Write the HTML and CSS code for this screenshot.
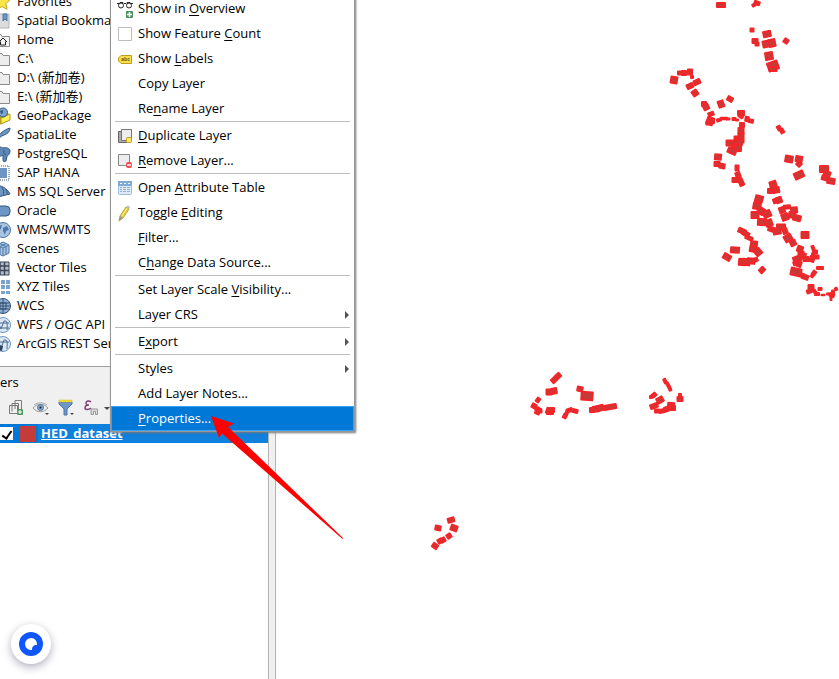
FILE: index.html
```html
<!DOCTYPE html>
<html lang="en">
<head>
  <meta charset="UTF-8" />
  <meta name="viewport" content="width=device-width, initial-scale=1.0"/>
  <title>HED_dataset - QGIS</title>
  <link rel="stylesheet" href="styles.css">
</head>
<body>

<main class="window">
  <aside class="dock">
    <section class="browser">
      <ul class="tree">
        <li><svg class="icon" viewBox="0 0 16 16"><path d="M8 0l2.400 5.200 5.600.6-4.200 3.800 1.200 5.700L8 12.500l-5 2.800 1.200-5.700L0 5.800l5.600-.6z" fill="#fbe54a" stroke="#c9a51a"/></svg>Favorites</li>
        <li><svg class="icon" viewBox="0 0 16 16"><path d="M1 1h14v14H1z" fill="#dcdcde" stroke="#b5b5b8"/><path d="M9 1h4v7l-2-2-2 2z" fill="#6d96c4" stroke="#4b77a8"/></svg>Spatial Bookmarks</li>
        <li><svg class="icon" viewBox="0 0 16 16"><path d="M1 2.500h6l1 2h7.500v10H1z" fill="#f3f3f3" stroke="#8b8b8b"/><path d="M5 10l4-4 4 4M6.500 9.500V13h5V9.500" fill="none" stroke="#222"/></svg>Home</li>
        <li><svg class="icon" viewBox="0 0 16 16"><path d="M0 2.500h8l1 2h6.500v10H0z" fill="#ededed" stroke="#8b8b8b"/></svg>C:\</li>
        <li><svg class="icon" viewBox="0 0 16 16"><path d="M0 2.500h8l1 2h6.500v10H0z" fill="#ededed" stroke="#8b8b8b"/></svg>D:\ (新加卷)</li>
        <li><svg class="icon" viewBox="0 0 16 16"><path d="M0 2.500h8l1 2h6.500v10H0z" fill="#ededed" stroke="#8b8b8b"/></svg>E:\ (新加卷)</li>
        <li><svg class="icon" viewBox="0 0 16 16"><path d="M1 7l6 3v6l-6-3z" fill="#e9cf2b" stroke="#9b8411"/><path d="M7 10l9-4v6l-9 4z" fill="#fdf05a" stroke="#b49a19"/><path d="M1 7l8-3 7 2-9 4z" fill="#c9ae22"/><circle cx="9" cy="4.500" r="4.500" fill="#7ba3cc" stroke="#35597f"/><path d="M6 3l3-1v3l-2 1z" fill="#35597f"/></svg>GeoPackage</li>
        <li><svg class="icon" viewBox="0 0 16 16"><path d="M1 15C4 8 9 3 16 1c0 4-3 6-6 7s-5 3-9 7z" fill="#6d96c4" stroke="#35597f"/></svg>SpatiaLite</li>
        <li><svg class="icon" viewBox="0 0 16 16"><path d="M2 2c3-2 5-1 7 0 3-1 7 0 7 3 0 2-1 4-3 5l-1 5c-1 1-3 1-3-1V9C5 12 3 9 2 2z" fill="#5d88b5" stroke="#35597f"/><path d="M10 4c-1 2 0 4 2 5" fill="none" stroke="#35597f"/></svg>PostgreSQL</li>
        <li><svg class="icon" viewBox="0 0 16 16"><path d="M3 3h10v10H3z" fill="#6d96c4"/><path d="M1 1h14v14H1z" fill="none" stroke="#35597f" stroke-dasharray="1 1"/></svg>SAP HANA</li>
        <li><svg class="icon" viewBox="0 0 16 16"><path d="M0 1c7 0 13 3 16 9-5 1-10 3-16 3z" fill="#6d96c4" stroke="#35597f"/><path d="M8 3c2 3 2 6 1 8M12 5c1 2 1 4 1 5" fill="none" stroke="#35597f"/></svg>MS SQL Server</li>
        <li><svg class="icon" viewBox="0 0 16 16"><rect x="0" y="3" width="16" height="10" rx="4" fill="#6d96c4" stroke="#35597f"/></svg>Oracle</li>
        <li><svg class="icon" viewBox="0 0 16 16"><circle cx="9" cy="8" r="7.500" fill="#a9c4e0" stroke="#4b77a8"/><path d="M3 4l5-1-1 4-2 1 1 4-3-3zM9 6l4-2 2 4-3 1-1 4-2-4z" fill="#4b77a8"/></svg>WMS/WMTS</li>
        <li><svg class="icon" viewBox="0 0 16 16"><path d="M9 1l6 3v8l-6 3-6-3V4z" fill="#a9c4e0" stroke="#4b77a8"/><path d="M3 4l6 3 6-3M9 7v8M6 2.500l6 3v8M12 2.500l-6 3v8" fill="none" stroke="#4b77a8"/></svg>Scenes</li>
        <li><svg class="icon" viewBox="0 0 16 16"><path d="M1 2h14v13H1z" fill="#b6bdc8" stroke="#3d4657"/><path d="M6 2v13M10.500 2v13M1 6h14M1 10.500h14" stroke="#3d4657" stroke-width="1.500"/></svg>Vector Tiles</li>
        <li><svg class="icon" viewBox="0 0 16 16"><path d="M1 1h4v4H1zM7 1h4v4H7zM12 1h4v4h-4zM1 6h4v4H1zM7 6h4v4H7zM12 6h4v4h-4zM1 12h4v3H1zM7 12h4v3H7zM12 12h4v3h-4z" fill="#7ba3cc"/></svg>XYZ Tiles</li>
        <li><svg class="icon" viewBox="0 0 16 16"><circle cx="9" cy="8" r="7.500" fill="#8fb0d4" stroke="#35506f"/><path d="M6 5h6v6H6zM2 8h14M9 1v14M3 5h12M3 11h12" fill="none" stroke="#35506f"/></svg>WCS</li>
        <li><svg class="icon" viewBox="0 0 16 16"><circle cx="9" cy="8" r="7.500" fill="#dbe6f2" stroke="#6d96c4"/><path d="M1 6h14M1 11h14M3 3l4 9 3-8 2 0M12 4c2 2 1 6 1 9" fill="none" stroke="#4b6f96"/></svg>WFS / OGC API</li>
        <li><svg class="icon" viewBox="0 0 16 16"><circle cx="9" cy="8" r="7.500" fill="#dbe6f2" stroke="#6d96c4"/><path d="M1 6h14M3 3l4 9 3-8 2 0M12 4c2 2 1 6 1 9" fill="none" stroke="#4b6f96"/><path d="M5 9l4 1-1 5-4-1z" fill="#294260"/></svg>ArcGIS REST Servers</li>
      </ul>
    </section>

    <section class="layers">
      <h2 class="panel-title">ers</h2>
      <div class="toolbar">
        <button class="tool" aria-label="Add Group"><svg class="icon" viewBox="0 0 16 16"><path d="M1.500 5.500h8v8h-8z" fill="none" stroke="#7b7b7b"/><path d="M4 11.500V3.500h6.500V9M7 9V.5h6.500V9" fill="none" stroke="#7b7b7b"/><rect x="9" y="9" width="6" height="6" rx="1" fill="#4f9a60"/><path d="M12 10v4M10 12h4" stroke="#fff"/></svg></button>
        <button class="tool" aria-label="Manage Map Themes"><svg class="icon" viewBox="0 0 16 16"><path d="M0 8c4-5 11-5 15 0-4 5-11 5-15 0z" fill="#eee" stroke="#999"/><circle cx="7.500" cy="7.500" r="3" fill="#7ba3cc" stroke="#5b7fa6"/><circle cx="7.500" cy="7.500" r="1" fill="#222"/><path d="M1 5c4-3 9-3 13 0" fill="none" stroke="#aaa"/><path d="M12 13h4l-2 2z" fill="#444"/></svg></button>
        <button class="tool" aria-label="Filter Legend"><svg class="icon" viewBox="0 0 16 16"><path d="M1 2h13v2L9 9v6H6V9L1 4z" fill="#6d96c4" stroke="#4b77a8"/><path d="M1 0h13v2H1z" fill="#f2df38" stroke="#d0b92a" stroke-width=".5"/><path d="M12 13h4l-2 2z" fill="#444"/></svg></button>
        <button class="tool" aria-label="Filter Legend by Expression"><svg class="icon" viewBox="0 0 16 16"><path d="M8 2C6 0 3 1 3 3s1 2 3 2C3 5 2 6 2 8s4 2 6 0" fill="none" stroke="#7f3f79" stroke-width="1.500"/><path d="M8 14.500V9h6.500v5.500h-2v-3h-2v3z" fill="#ddd" stroke="#999"/></svg></button>
        <span class="drop"></span>
      </div>
      <div class="layer-list">
        <label class="layer-row">
          <input type="checkbox" class="layer-check" checked>
          <span class="swatch"></span>
          <span class="layer-name">HED_dataset</span>
        </label>
      </div>
    </section>
  </aside>

  <div class="splitter"></div>

  <section class="map">
    <svg id="mapCanvas" class="map-canvas" viewBox="276 0 563 679" preserveAspectRatio="xMinYMin"></svg>
  </section>
</main>

<div class="menu" role="menu">
  <button class="item"><svg class="icon" viewBox="0 0 16 16"><path d="M0 2.500h2l1-1h3l1 1h2l1-1h3l1 1h2" fill="none" stroke="#222"/><circle cx="4" cy="4.500" r="2.500" fill="none" stroke="#222"/><circle cx="12" cy="4.500" r="2.500" fill="none" stroke="#222"/><rect x="9" y="10" width="7" height="7" rx="1" fill="#4c9060"/><path d="M12.500 11v5M10 13.500h5" stroke="#fff" stroke-width="1.500"/></svg><span>Show in <u>O</u>verview</span></button>
  <button class="item"><svg class="icon" viewBox="0 0 16 16"><path d="M1.500 1.500h13v13h-13z" fill="#fff" stroke="#bdbdbd"/></svg><span>Show Feature <u>C</u>ount</span></button>
  <button class="item"><svg class="icon" viewBox="0 0 16 16"><path d="M4 4.500h10.500v8H4L1.500 10V7z" fill="#f6df4b" stroke="#bd9d19"/><text class="abc" x="4" y="10">abc</text></svg><span>Show <u>L</u>abels</span></button>
  <button class="item"><span class="icon"></span><span>Copy Layer</span></button>
  <button class="item"><span class="icon"></span><span>Re<u>n</u>ame Layer</span></button>
  <hr>
  <button class="item"><svg class="icon" viewBox="0 0 16 16"><path d="M1.500 3.500h9v11h-9z" fill="#aaa" stroke="#666"/><path d="M4.500 1.500h10v11h-10z" fill="#ededed" stroke="#777"/><rect x="9.500" y="9.500" width="5" height="5" rx="1" fill="#fae967" stroke="#c39b1d"/></svg><span><u>D</u>uplicate Layer</span></button>
  <button class="item"><svg class="icon" viewBox="0 0 16 16"><path d="M1.500 1.500h11v11h-11z" fill="#ededed" stroke="#888"/><rect x="9" y="9" width="6" height="6" rx="2" fill="#ec4c55"/><path d="M10 12h4" stroke="#fff" stroke-width="1.500"/></svg><span><u>R</u>emove Layer...</span></button>
  <hr>
  <button class="item"><svg class="icon" viewBox="0 0 16 16"><rect x="1.500" y="1.500" width="13" height="13" rx="1" fill="#e0ebf7" stroke="#9cbcdf"/><path d="M1 1h14v5H1z" fill="#7fa9d6"/><path d="M3 3.500h2M7 3.500h2M11 3.500h2" stroke="#fff"/><path d="M3 7.500h2M3 9.500h2M3 11.500h2M6 7.500h3M6 9.500h3M6 11.500h3M10 7.500h3M10 9.500h3M10 11.500h3" stroke="#8eafd3"/></svg><span>Open <u>A</u>ttribute Table</span></button>
  <button class="item"><svg class="icon" viewBox="0 0 16 16"><path d="M3 11L9 2l3 2-6 9-4 3z" fill="#e8cf3d" stroke="#b9a236"/><path d="M5 11l5-8" stroke="#fff49a"/><path d="M9 2l2-1.500 2 1.500-1 2z" fill="#bbb"/><path d="M3 11l3 2-4 3z" fill="#999"/></svg><span>Toggle <u>E</u>diting</span></button>
  <button class="item"><span class="icon"></span><span><u>F</u>ilter...</span></button>
  <button class="item"><span class="icon"></span><span>C<u>h</u>ange Data Source...</span></button>
  <hr>
  <button class="item"><span class="icon"></span><span>Set Layer Scale <u>V</u>isibility...</span></button>
  <button class="item sub"><span class="icon"></span><span>Layer CRS</span></button>
  <hr>
  <button class="item sub"><span class="icon"></span><span>E<u>x</u>port</span></button>
  <hr>
  <button class="item sub"><span class="icon"></span><span>Styles</span></button>
  <button class="item"><span class="icon"></span><span>Add Layer Notes...</span></button>
  <button class="item active"><span class="icon"></span><span><u>P</u>roperties...</span></button>
</div>

<svg class="arrow" viewBox="0 0 132 124"><path d="M0 0l23 7.500-6 3.500L132 122l-.5 1L11 17.500 8 22z" fill="#f00"/></svg>

<button class="fab" aria-label="Assistant">
  <svg class="fab-icon" viewBox="0 0 24 24"><circle cx="12" cy="12" r="12" fill="#0f56ff"/><path d="M18 13a6 6 0 1 0-5 5c0-3 1-5 5-5z" fill="#fff"/></svg>
</button>

<script>
// building footprints: x, y, width, height, rotation
const buildings = [
  [721,5,8,4,0], [757,3,5,3,20], [754,5,3,2,-30], [752,30,3,3,0], [767,34,7,5,-12], [766,44,6,6,-12], [772,43,6,7,-12],
  [755,41,5,4,0], [757,44,3,3,0], [786,41,4,4,35], [769,56,7,7,-10], [773,66,10,8,-20], [773,69,7,4,0],
  [674,80,6,6,10], [680,73,4,3,0], [684,73,4,4,0], [690,72,4,5,0], [692,77,2,2,0], [697,82,6,4,-25], [690,86,6,4,-25],
  [695,93,5,5,-35], [704,104,4,4,0], [706,107,5,5,-25], [721,104,5,6,-20], [730,99,5,4,30], [711,114,5,3,-20],
  [710,121,6,7,20], [708,123,3,3,0], [712,121,4,4,0], [719,120,4,2,-20], [724,118.500,6,1.500,0], [728,119,3,1,0], [734,119,3,2,0], [737,120,2,1,0],
  [741,113,6,4,0], [741,116,4,3,30], [747,119,3,4,10], [751,121,4,3,10],
  [742,125,4,4,0], [741,131,5,6,0], [741,138,5,9,0], [737,139,5,5,0], [736,144,8,6,0], [730,143,7,5,0], [739,142,7,5,15], [738,148,6,6,0], [732,151,8,5,25],
  [779,128,3,4,-30], [782,131,3,4,-30],
  [718,157,6,5,5], [717,164,5,4,0], [722,166,5,4,10], [737,168,3,5,0], [738,175,4,5,-20], [735,180,5,4,0], [741,182,4,7,-25],
  [789,159,7,6,10], [799,159,6,5,10], [799,164,4,4,45], [799,175,9,6,-25],
  [824,169,8,6,0], [827,174,6,5,20], [825,178,6,4,15], [831,181,7,5,10],
  [773,184,6,5,-20], [770,191,4,4,0], [776,190,6,5,-10], [773,188,5,4,0], [775,201,3,4,-20], [779,200,5,5,-20],
  [759,199,7,6,15], [757,206,7,6,10], [755,215,7,6,0], [761,211,6,6,30], [767,214,7,6,-25],
  [782,210,5,5,-20], [787,207,6,3,-5], [794,210,6,5,-5], [785,217,6,6,-20], [792,215,6,5,10], [797,218,7,5,15],
  [762,222,8,6,5], [769,223,6,6,-20], [771,229,5,4,20], [777,231,7,6,-10], [781,227,8,5,0], [785,231,4,5,-20],
  [805,235,7,6,0], [788,238,7,6,-30], [793,243,5,5,-25],
  [742,231,7,4,25], [746,234,6,4,30], [749,238,7,3,25], [754,244,6,5,5], [753,249,6,5,10], [758,252,6,6,-40],
  [735,250,8,5,5], [727,257,7,5,30], [742,262,6,6,5], [746,262,7,6,5], [751,261,7,5,5], [755,260,5,3,-20], [762,270,4,5,45],
  [800,249,5,5,20], [801,254,5,5,0], [797,259,7,5,-20], [803,256,5,5,10], [806,259,5,4,0], [796,263,5,3,-20], [799,264,4,5,20],
  [813,248,2,4,-20], [815,252,4,3,0], [812,259,4,5,15], [813,255,2,3,0], [817,257,3,3,0], [820,268,6,2,0],
  [796,272,10,7,12], [802,275,3,3,20], [805,277,6,4,20], [814,273,3,4,35], [812,276,2,2,35],
  [811,287,5,4,0], [810,291,6,3,-20], [815,292,2,4,-30], [817,294,4,2,0], [820,289,3,2,0], [823,295,3,.500,0], [828,294,2,1,0], [833,291,2,1,0], [836,289,2,2,-20],
  [832,295,4,3,20], [830,294,2,1,0], [833,294,2,3,0], [831,298,1,4,0],
  [554,380,5,4,-42], [558,376,5,4,-42], [549,392,5,5,0], [554,391,5,5,-10], [538,400,3,4,35], [534,406,4,4,30], [537,409,3,3,0], [538,411,4,6,25], [540,411,3,3,0],
  [549,411,5,5,20], [552,410,4,4,0], [550,413,6,2,0], [565,416,3,4,25], [567,412,2,4,15], [570,410,4,3,-20], [575,411,5,3,15],
  [580,389,5,4,10], [587,396,11,8,4], [592,410,4,4,0], [596,409,6,5,-10], [600,408,6,5,-15], [610,407,12,4,-10],
  [665,381,2,4,-25], [668,385,2,5,-30], [670,389,2,3,-20], [654,395,4,3,-40], [651,397,2,2,0], [660,400,6,5,-30], [654,406,7,4,-20], [657,411,4,3,0], [662,411,5,3,-10], [667,409,5,4,-20], [671,406,6,6,5], [673,408,4,4,0],
  [680,395,2,2,0], [680,399,5,4,0],
  [451,520,6,4,-15], [438,528,5,4,10], [454,528,6,5,20], [440,541,4,4,-30], [443,540,4,4,-30], [449,536,4,4,-35], [435,546,5,4,35]
];

const canvas = document.getElementById("mapCanvas");
buildings.forEach(([x, y, w, h, a]) => {
  const rect = document.createElementNS("http://www.w3.org/2000/svg", "rect");
  rect.setAttribute("x", x - w / 2);
  rect.setAttribute("y", y - h / 2);
  rect.setAttribute("width", w);
  rect.setAttribute("height", h);
  rect.setAttribute("transform", `rotate(${a} ${x} ${y})`);
  rect.setAttribute("class", "building");
  canvas.appendChild(rect);
});
</script>

</body>
</html>
```
FILE: styles.css
```css
* {
  box-sizing: border-box;
}
body {
  margin: 0;
  font-family: "Open Sans", "Noto Sans CJK SC", sans-serif;
  font-size: 13px;
  line-height: 19px;
  color: #000;
  background: #fff;
  overflow: hidden;
}
button {
  font: inherit;
  color: inherit;
  border: none;
  background: none;
  padding: 0;
}
.icon {
  width: 16px;
  height: 16px;
  flex: none;
  overflow: visible;
}
.window {
  display: flex;
  height: 100vh;
}

/* left dock */
.dock {
  width: 269px;
  flex: none;
  display: flex;
  flex-direction: column;
  overflow: hidden;
}
.browser {
  padding-bottom: 13px;
  border-bottom: 1px solid #a0a0a0;
}
.tree {
  list-style: none;
  margin: -8px 0 0;
  padding: 0;
}
.tree li {
  display: flex;
  align-items: center;
  gap: 7px;
  height: 19px;
  margin-left: -6px;
  white-space: nowrap;
}
.layers {
  flex: 1;
  display: flex;
  flex-direction: column;
  background: #f0f0f0;
}
.panel-title {
  margin: 0;
  padding: 6px 0 0;
  font-size: 13px;
  font-weight: normal;
}
.toolbar {
  display: flex;
  align-items: center;
  gap: 9px;
  height: 32px;
  padding-left: 8px;
}
.tool {
  display: flex;
}
.drop {
  border: 3px solid transparent;
  border-top-color: #444;
  border-bottom: none;
  margin-left: -4px;
}
.layer-list {
  flex: 1;
  background: #fff;
}
.layer-row {
  display: flex;
  align-items: center;
  height: 19px;
  background: #0078d7;
  color: #fff;
}
.layer-check {
  appearance: none;
  position: relative;
  width: 13px;
  height: 13px;
  margin: 0 7px 0 0;
  background: #fff;
}
.layer-check:checked::after {
  content: "";
  position: absolute;
  left: 4px;
  top: 2px;
  width: 4px;
  height: 8px;
  border: solid #000;
  border-width: 0 2px 2px 0;
  transform: rotate(35deg);
}
.swatch {
  width: 16px;
  height: 16px;
  background: #c43c39;
}
.layer-name {
  flex: 1;
  margin-left: 2px;
  padding-left: 3px;
  background: #0f80db;
  font-weight: bold;
  text-decoration: underline;
}
.splitter {
  width: 7px;
  flex: none;
  background: #f0f0f0;
  border: solid #b4b4b4;
  border-width: 0 1px;
  margin-left: -1px;
  width: 8px;
}

/* map */
.map {
  flex: 1;
  overflow: hidden;
}
.map-canvas {
  display: block;
  width: 100%;
}
.building {
  fill: #c43c39;
  stroke: #f32529;
  stroke-width: 2;
  stroke-linejoin: round;
}

/* context menu */
.menu {
  position: absolute;
  top: -4px;
  left: 110px;
  width: 245px;
  background: #fff;
  border: 1px solid #979797;
  border-top: none;
  box-shadow: 1px 1px 2px #777;
}
.menu hr {
  height: 1px;
  margin: 0 4px 1px;
  border: none;
  background: #bdbdbd;
}
.item {
  display: flex;
  align-items: center;
  gap: 5px;
  width: 100%;
  height: 25px;
  padding-left: 6px;
  text-align: left;
  white-space: nowrap;
}
.item u {
  text-underline-offset: 2px;
}
.item.sub::after {
  content: "";
  margin-left: auto;
  margin-right: 5px;
  border: 4px solid transparent;
  border-left-color: #555;
  border-right: none;
}
.item.active {
  background: #0078d7;
  color: #fff;
  outline: 1px solid #3aa0f0;
  outline-offset: -1px;
}
.abc {
  font-size: 5px;
  font-weight: bold;
  fill: #6b5a10;
}

.arrow {
  position: absolute;
  left: 211px;
  top: 416px;
  width: 132px;
  height: 124px;
}
.fab {
  position: absolute;
  left: 11px;
  bottom: 15px;
  width: 40px;
  height: 40px;
  display: flex;
  align-items: center;
  justify-content: center;
  border-radius: 50%;
  background: #fff;
  box-shadow: 0 3px 8px rgba(30, 30, 70, 0.35);
}
.fab-icon {
  width: 24px;
  height: 24px;
}
```
